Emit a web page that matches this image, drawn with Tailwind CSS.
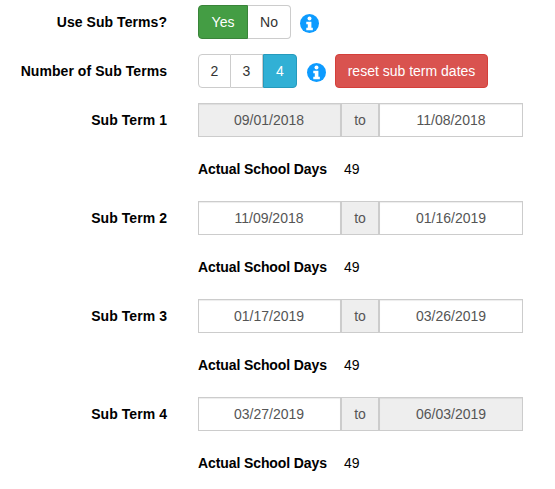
<!DOCTYPE html>
<html><head><meta charset="utf-8"><script src="https://cdn.jsdelivr.net/npm/@tailwindcss/browser@4"></script></head>
<body class="bg-white">
<div class="w-[555px] h-[489px] overflow-hidden pt-[5px] font-['Liberation_Sans',Arial,sans-serif] text-[14px] text-[#333]">
  <div class="flex items-center h-[34px] mb-[15px]">
    <div class="w-[167px] text-right font-bold text-black tracking-[0.06px]">Use Sub Terms?</div>
    <div class="ml-[31px] flex h-[34px]">
      <div class="w-[50px] flex items-center justify-center bg-[#449d44] border border-[#398439] text-white rounded-l-[4px]">Yes</div>
      <div class="w-[43px] flex items-center justify-center bg-white border border-l-0 border-[#ccc] rounded-r-[4px]">No</div>
    </div>
    <svg class="ml-[9px] mt-[3px]" width="19" height="19" viewBox="0 0 20 20"><circle cx="10" cy="10" r="10" fill="#0d9bff"/><circle cx="10" cy="4.8" r="2.1" fill="#fff"/><path d="M6.6 8.2h5.4v6.4h1.5v2.5H6.6v-2.5h1.6v-3.9H6.6z" fill="#fff"/></svg>
  </div>
  <div class="flex items-center h-[34px] mb-[15px]">
    <div class="w-[167px] text-right font-bold text-black tracking-[0.06px]">Number of Sub Terms</div>
    <div class="ml-[31px] flex h-[34px]">
      <div class="w-[33px] flex items-center justify-center bg-white border border-[#ccc] rounded-l-[4px]">2</div>
      <div class="w-[32px] flex items-center justify-center bg-white border border-l-0 border-[#ccc]">3</div>
      <div class="w-[34px] flex items-center justify-center bg-[#31b0d5] border border-[#269abc] text-white rounded-r-[4px]">4</div>
    </div>
    <svg class="ml-[10px] mt-[2px]" width="19" height="19" viewBox="0 0 20 20"><circle cx="10" cy="10" r="10" fill="#0d9bff"/><circle cx="10" cy="4.8" r="2.1" fill="#fff"/><path d="M6.6 8.2h5.4v6.4h1.5v2.5H6.6v-2.5h1.6v-3.9H6.6z" fill="#fff"/></svg>
    <div class="ml-[9px] w-[153px] h-[34px] flex items-center justify-center bg-[#d9534f] border border-[#d43f3a] rounded-[4px] text-white">reset sub term dates</div>
  </div>

  <div class="flex items-center h-[34px]">
    <div class="w-[167px] text-right font-bold text-black tracking-[0.06px]">Sub Term 1</div>
    <div class="ml-[31px] flex w-[325px] h-[34px] text-[#555]">
      <div class="w-[144px] flex items-center justify-center pr-px bg-[#eee] border border-r-2 border-[#ccc] shadow-[inset_0_1px_1px_rgba(0,0,0,0.075)]">09/01/2018</div>
      <div class="w-[36px] flex items-center justify-center bg-[#eee] border-y border-[#ccc]">to</div>
      <div class="w-[145px] flex items-center justify-center bg-white border border-l-2 border-[#ccc] shadow-[inset_0_1px_1px_rgba(0,0,0,0.075)]">11/08/2018</div>
    </div>
  </div>
  <div class="flex items-center h-[20px] mt-[22px] mb-[22px] ml-[198px] text-black"><b class="w-[146px] tracking-[-0.1px]">Actual School Days</b><span>49</span></div>

  <div class="flex items-center h-[34px]">
    <div class="w-[167px] text-right font-bold text-black tracking-[0.06px]">Sub Term 2</div>
    <div class="ml-[31px] flex w-[325px] h-[34px] text-[#555]">
      <div class="w-[144px] flex items-center justify-center pr-px bg-white border border-r-2 border-[#ccc] shadow-[inset_0_1px_1px_rgba(0,0,0,0.075)]">11/09/2018</div>
      <div class="w-[36px] flex items-center justify-center bg-[#eee] border-y border-[#ccc]">to</div>
      <div class="w-[145px] flex items-center justify-center bg-white border border-l-2 border-[#ccc] shadow-[inset_0_1px_1px_rgba(0,0,0,0.075)]">01/16/2019</div>
    </div>
  </div>
  <div class="flex items-center h-[20px] mt-[22px] mb-[22px] ml-[198px] text-black"><b class="w-[146px] tracking-[-0.1px]">Actual School Days</b><span>49</span></div>

  <div class="flex items-center h-[34px]">
    <div class="w-[167px] text-right font-bold text-black tracking-[0.06px]">Sub Term 3</div>
    <div class="ml-[31px] flex w-[325px] h-[34px] text-[#555]">
      <div class="w-[144px] flex items-center justify-center pr-px bg-white border border-r-2 border-[#ccc] shadow-[inset_0_1px_1px_rgba(0,0,0,0.075)]">01/17/2019</div>
      <div class="w-[36px] flex items-center justify-center bg-[#eee] border-y border-[#ccc]">to</div>
      <div class="w-[145px] flex items-center justify-center bg-white border border-l-2 border-[#ccc] shadow-[inset_0_1px_1px_rgba(0,0,0,0.075)]">03/26/2019</div>
    </div>
  </div>
  <div class="flex items-center h-[20px] mt-[22px] mb-[22px] ml-[198px] text-black"><b class="w-[146px] tracking-[-0.1px]">Actual School Days</b><span>49</span></div>

  <div class="flex items-center h-[34px]">
    <div class="w-[167px] text-right font-bold text-black tracking-[0.06px]">Sub Term 4</div>
    <div class="ml-[31px] flex w-[325px] h-[34px] text-[#555]">
      <div class="w-[144px] flex items-center justify-center pr-px bg-white border border-r-2 border-[#ccc] shadow-[inset_0_1px_1px_rgba(0,0,0,0.075)]">03/27/2019</div>
      <div class="w-[36px] flex items-center justify-center bg-[#eee] border-y border-[#ccc]">to</div>
      <div class="w-[145px] flex items-center justify-center bg-[#eee] border border-l-2 border-[#ccc] shadow-[inset_0_1px_1px_rgba(0,0,0,0.075)]">06/03/2019</div>
    </div>
  </div>
  <div class="flex items-center h-[20px] mt-[22px] ml-[198px] text-black"><b class="w-[146px] tracking-[-0.1px]">Actual School Days</b><span>49</span></div>
</div>
</body></html>
